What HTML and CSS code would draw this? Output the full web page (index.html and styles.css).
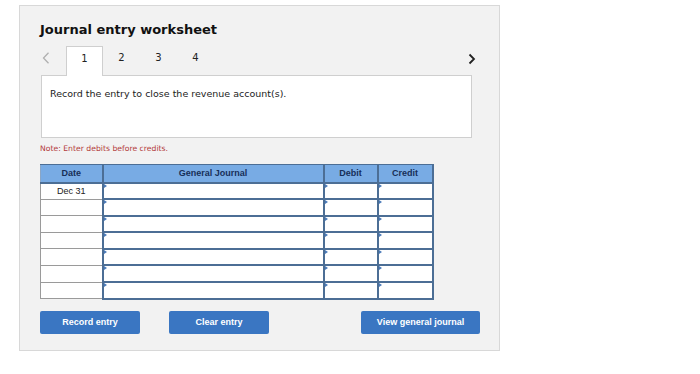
FILE: index.html
```html
<!DOCTYPE html>
<html>
<head>
<meta charset="utf-8">
<link rel="stylesheet" href="styles.css">
</head>
<body>
<div class="panel">
  <h1 class="title">Journal entry worksheet</h1>
  <div class="tabs">
    <span class="nav prev"><svg width="8" height="12" viewBox="0 0 8 12"><path d="M6.5 0.8 L1.5 6 L6.5 11.2" fill="none" stroke="#b0b0b0" stroke-width="1.3"/></svg></span>
    <span class="tab active">1</span>
    <span class="tab">2</span>
    <span class="tab">3</span>
    <span class="tab">4</span>
    <span class="nav next"><svg width="8" height="12" viewBox="0 0 8 12"><path d="M1.5 1.5 L6 6 L1.5 10.5" fill="none" stroke="#222" stroke-width="1.8"/></svg></span>
  </div>
  <div class="prompt">Record the entry to close the revenue account(s).</div>
  <div class="note">Note: Enter debits before credits.</div>
  <table class="journal">
    <thead>
      <tr><th class="c-date">Date</th><th class="c-gj">General Journal</th><th class="c-dr">Debit</th><th class="c-cr">Credit</th></tr>
    </thead>
    <tbody>
      <tr><td class="date">Dec 31</td><td class="in"></td><td class="in"></td><td class="in last"></td></tr>
      <tr><td class="date"></td><td class="in"></td><td class="in"></td><td class="in last"></td></tr>
      <tr><td class="date"></td><td class="in"></td><td class="in"></td><td class="in last"></td></tr>
      <tr><td class="date"></td><td class="in"></td><td class="in"></td><td class="in last"></td></tr>
      <tr><td class="date"></td><td class="in"></td><td class="in"></td><td class="in last"></td></tr>
      <tr><td class="date"></td><td class="in"></td><td class="in"></td><td class="in last"></td></tr>
      <tr><td class="date"></td><td class="in"></td><td class="in"></td><td class="in last"></td></tr>
    </tbody>
  </table>
  <div class="buttons">
    <button class="btn b-record">Record entry</button>
    <button class="btn b-clear">Clear entry</button>
    <button class="btn b-view">View general journal</button>
  </div>
</div>
</body>
</html>
```
FILE: styles.css
```css
html, body { margin: 0; padding: 0; background: #fff; }
body { font-family: "DejaVu Sans", Verdana, sans-serif; color: #222; }
.panel {
  margin: 5px 0 0 19px;
  width: 481px;
  height: 346px;
  box-sizing: border-box;
  border: 1px solid #d8d8d8;
  background: #f2f2f2;
  padding: 15px 0 0 20px;
}
.title {
  margin: 0;
  font-size: 13px;
  line-height: 17px;
  font-weight: bold;
  color: #111;
}
.tabs {
  margin-top: 8px;
  display: flex;
  align-items: stretch;
  height: 29px;
  width: 436px;
}
.nav svg { display: block; }
.prev { width: 26px; padding: 6px 0 0 2px; box-sizing: border-box; }
.next { margin-left: auto; padding-top: 7px; }
.tab {
  width: 37px;
  text-align: center;
  font-size: 10px;
  line-height: 24px;
  color: #222;
  box-sizing: border-box;
}
.tab.active {
  background: #fff;
  border: 1px solid #cfcfcf;
  border-bottom: none;
  position: relative;
  z-index: 1;
  margin-bottom: -1px;
}
.prompt {
  margin-left: 1px;
  width: 431px;
  height: 63px;
  box-sizing: border-box;
  background: #fff;
  border: 1px solid #cfcfcf;
  font-size: 9.5px;
  padding: 11px 0 0 8px;
  line-height: 14px;
  color: #222;
}
.note {
  margin-top: 6px;
  font-size: 7.7px;
  line-height: 9px;
  color: #b23a3a;
}
.journal {
  margin-top: 11px;
  border-collapse: collapse;
  width: 392px;
  table-layout: fixed;
  font-family: "Liberation Sans", Arial, sans-serif;
}
.journal th {
  height: 18px;
  padding: 0;
  background: #78abe4;
  color: #172f58;
  font-size: 9px;
  font-weight: bold;
  border: 1px solid #4c6e95;
  border-bottom: 2px solid #4c6e95;
  box-sizing: border-box;
}
.c-date { width: 62px; border-left: 1px solid #8aa6c6 !important; }
.c-gj { width: 221px; border-left: 2px solid #4c6e95 !important; }
.c-dr { width: 54px; border-left: 2px solid #4c6e95 !important; }
.c-cr { width: 55px; border-left: 2px solid #4c6e95 !important; border-right: 2px solid #4c6e95 !important; }
.journal td {
  height: 16.6px;
  padding: 0;
  background: #fff;
  box-sizing: border-box;
}
.journal td.date {
  border: 1px solid #9a9a9a;
  font-size: 9px;
  text-align: center;
  color: #222;
  vertical-align: middle;
}
.journal td.in {
  border-left: 2px solid #4c6e95;
  border-bottom: 2px solid #4c6e95;
  position: relative;
}
.journal td.in.last { border-right: 2px solid #4c6e95; }
.journal td.in::before {
  content: "";
  position: absolute;
  left: 0;
  top: 0;
  border-left: 3px solid #4a7ab8;
  border-top: 2px solid transparent;
  border-bottom: 2px solid transparent;
}
.buttons {
  margin-top: 11px;
  display: flex;
  width: 440px;
}
.btn {
  height: 23px;
  border: none;
  border-radius: 2px;
  background: #3a76c2;
  color: #fff;
  font-family: "Liberation Sans", Arial, sans-serif;
  font-weight: bold;
  font-size: 9px;
  padding: 0;
}
.b-record { width: 100px; }
.b-clear { width: 100px; margin-left: 29px; }
.b-view { width: 119px; margin-left: auto; }
```
